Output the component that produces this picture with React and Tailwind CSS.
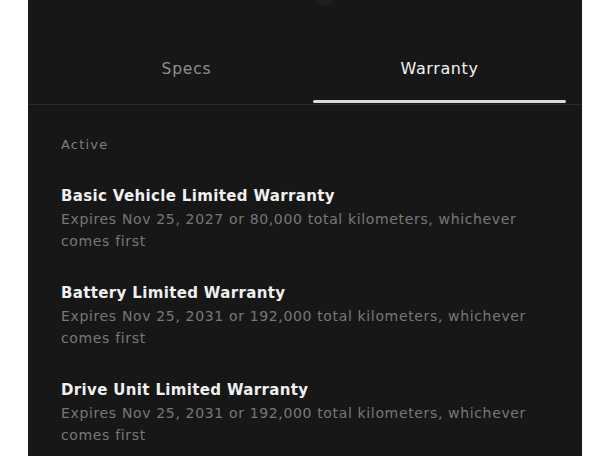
const warranties = [
  {
    title: "Basic Vehicle Limited Warranty",
    detail: "Expires Nov 25, 2027 or 80,000 total kilometers, whichever comes first",
  },
  {
    title: "Battery Limited Warranty",
    detail: "Expires Nov 25, 2031 or 192,000 total kilometers, whichever comes first",
  },
  {
    title: "Drive Unit Limited Warranty",
    detail: "Expires Nov 25, 2031 or 192,000 total kilometers, whichever comes first",
  },
];

const App = () => {
  return (
    <div
      className="h-[456px] w-[611px] overflow-hidden bg-white"
      style={{ fontFamily: "'DejaVu Sans', 'Liberation Sans', sans-serif" }}
    >
      <div className="relative mx-[28px] h-full w-[554px] bg-[#171717]">
        <div className="absolute left-[288px] top-[-6px] h-[11px] w-[18px] rounded-full bg-[#1e1e1e]" />

        {/* tabs */}
        <div className="border-b border-[#2a2a2a] pt-[58px]">
          <div className="grid grid-cols-2 pl-[32px] pr-[16px]">
            <button className="pb-[24px] text-[15.5px] leading-[22px] tracking-[0.8px] text-[#8f8f8f]">
              Specs
            </button>
            <button className="relative pb-[24px] text-[16px] leading-[22px] tracking-[0.6px] text-[#f2f2f2]">
              Warranty
              <span className="absolute bottom-[1px] left-0 right-0 h-[3px] rounded-full bg-[#d9d9d9]" />
            </button>
          </div>
        </div>

        <div className="pl-[33px] pr-[20px] pt-[31px]">
          <p className="text-[13px] leading-[18px] tracking-[1.2px] text-[#7e7e7e]">Active</p>

          <div className="mt-[31px] flex flex-col gap-[30px]">
            {warranties.map((w) => (
              <div key={w.title}>
                <h3 className="text-[15px] font-bold leading-[22px] tracking-[0.35px] text-[#f0f0f0]">
                  {w.title}
                </h3>
                <p className="mt-[1px] w-[472px] text-[14px] leading-[22px] tracking-[0.65px] text-[#777777]">
                  {w.detail}
                </p>
              </div>
            ))}
          </div>
        </div>
      </div>
    </div>
  );
};

export default App;
